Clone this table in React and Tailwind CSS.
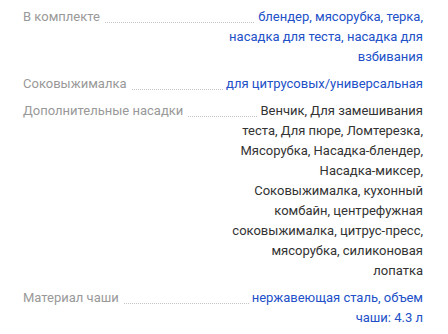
import React from 'react';

const specs = [
  { label: 'В комплекте', value: 'блендер, мясорубка, терка, насадка для теста, насадка для взбивания', link: true },
  { label: 'Соковыжималка', value: 'для цитрусовых/универсальная', link: true, nowrap: true },
  {
    label: 'Дополнительные насадки',
    value:
      'Венчик, Для замешивания теста, Для пюре, Ломтерезка, Мясорубка, Насадка-блендер, Насадка-миксер, Соковыжималка, кухонный комбайн, центрефужная соковыжималка, цитрус-пресс, мясорубка, силиконовая лопатка',
  },
  { label: 'Материал чаши', value: 'нержавеющая сталь, объем чаши: 4.3 л', link: true },
];

const SpecRow = ({ label, value, link, nowrap }) => (
  <div className="flex items-start leading-[20px]">
    <span className="text-[#999] pr-[5px] whitespace-nowrap">{label}</span>
    <div className="flex-1 flex justify-end bg-[linear-gradient(to_right,#c4c4c4_50%,transparent_50%)] bg-[length:2px_1px] bg-repeat-x bg-[position:0_15px]">
      <div className={nowrap ? 'text-right whitespace-nowrap' : 'w-[196px] text-right'}>
        <span className={`bg-white pl-[3px] ${link ? 'text-[#2150c8]' : 'text-[#333]'}`}>{value}</span>
      </div>
    </div>
  </div>
);

const App = () => {
  return (
    <div className="w-[448px] h-[334px] bg-white px-[23px] pt-[7px] text-[13px] font-['Roboto',sans-serif]">
      <div className="w-[400px] flex flex-col gap-[7px]">
        {specs.map((s) => (
          <SpecRow key={s.label} {...s} />
        ))}
      </div>
    </div>
  );
};

export default App;
